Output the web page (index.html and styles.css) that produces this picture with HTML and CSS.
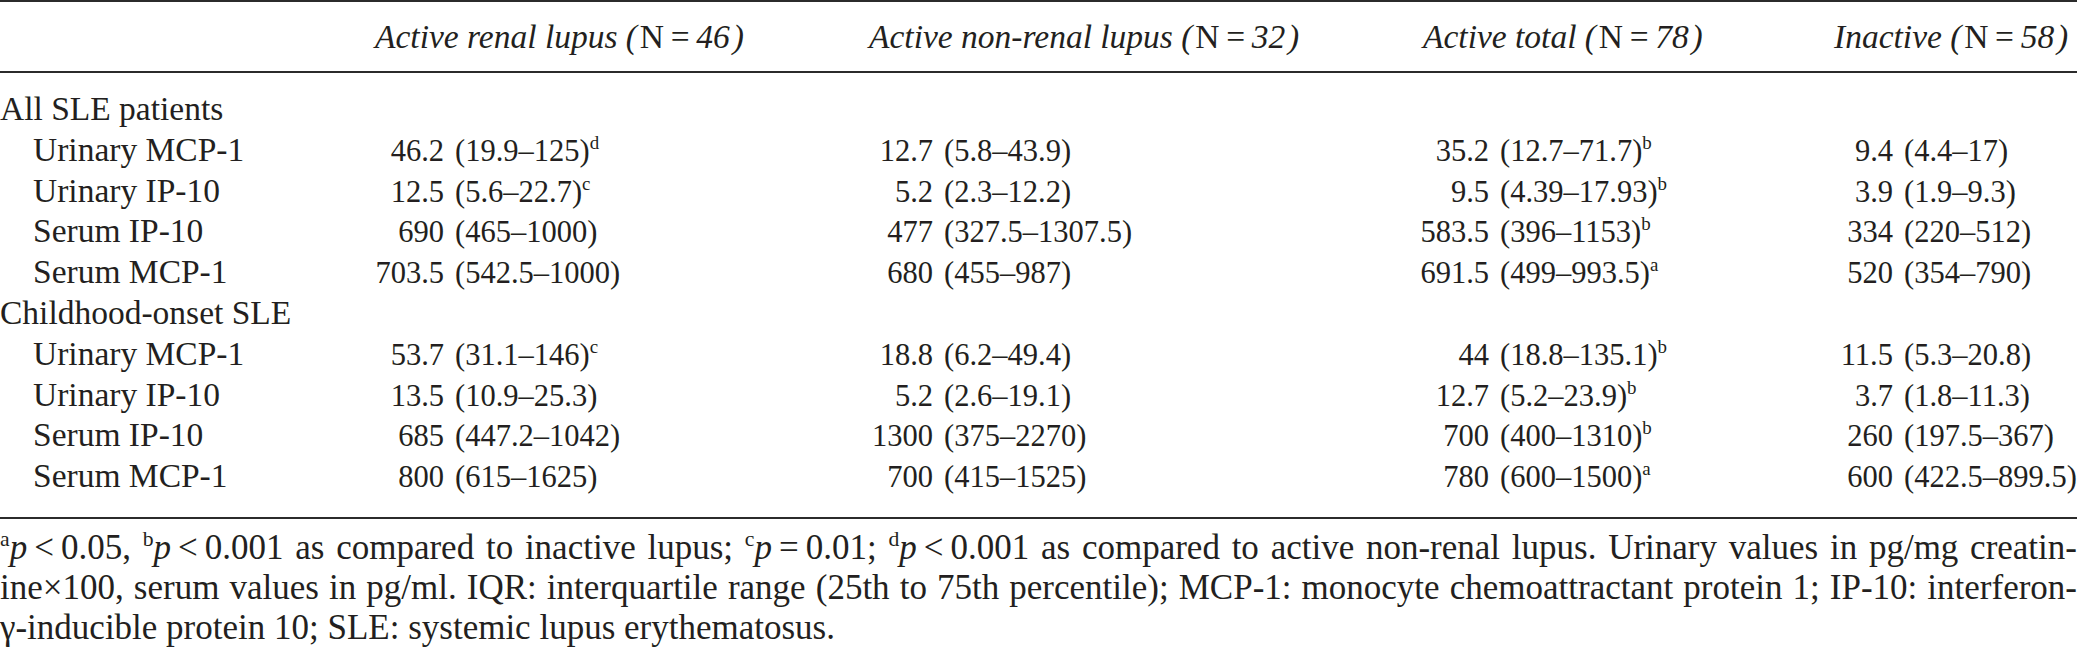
FILE: index.html
```html
<!DOCTYPE html>
<html>
<head>
<meta charset="utf-8">
<link rel="stylesheet" href="styles.css">
</head>
<body>
<div class="page">
  <div class="table">
    <div class="head">
      <div class="hc"></div>
      <div class="hc"><i>Active renal lupus (&#8202;</i>N&#8201;=&#8201;<i>46&#8202;)</i></div>
      <div class="hc"><i>Active non-renal lupus (&#8202;</i>N&#8201;=&#8201;<i>32&#8202;)</i></div>
      <div class="hc"><i>Active total (&#8202;</i>N&#8201;=&#8201;<i>78&#8202;)</i></div>
      <div class="hc"><i>Inactive (&#8202;</i>N&#8201;=&#8201;<i>58&#8202;)</i></div>
    </div>
    <div class="body">
      <div class="row"><div class="lab grp">All SLE patients</div></div>

      <div class="row">
        <div class="lab">Urinary MCP-1</div>
        <div class="cell"><span class="n">46.2</span><span>(19.9–125)<sup>d</sup></span></div>
        <div class="cell"><span class="n">12.7</span><span>(5.8–43.9)</span></div>
        <div class="cell"><span class="n">35.2</span><span>(12.7–71.7)<sup>b</sup></span></div>
        <div class="cell"><span class="n">9.4</span><span>(4.4–17)</span></div>
      </div>
      <div class="row">
        <div class="lab">Urinary IP-10</div>
        <div class="cell"><span class="n">12.5</span><span>(5.6–22.7)<sup>c</sup></span></div>
        <div class="cell"><span class="n">5.2</span><span>(2.3–12.2)</span></div>
        <div class="cell"><span class="n">9.5</span><span>(4.39–17.93)<sup>b</sup></span></div>
        <div class="cell"><span class="n">3.9</span><span>(1.9–9.3)</span></div>
      </div>
      <div class="row">
        <div class="lab">Serum IP-10</div>
        <div class="cell"><span class="n">690</span><span>(465–1000)</span></div>
        <div class="cell"><span class="n">477</span><span>(327.5–1307.5)</span></div>
        <div class="cell"><span class="n">583.5</span><span>(396–1153)<sup>b</sup></span></div>
        <div class="cell"><span class="n">334</span><span>(220–512)</span></div>
      </div>
      <div class="row">
        <div class="lab">Serum MCP-1</div>
        <div class="cell"><span class="n">703.5</span><span>(542.5–1000)</span></div>
        <div class="cell"><span class="n">680</span><span>(455–987)</span></div>
        <div class="cell"><span class="n">691.5</span><span>(499–993.5)<sup>a</sup></span></div>
        <div class="cell"><span class="n">520</span><span>(354–790)</span></div>
      </div>

      <div class="row"><div class="lab grp">Childhood-onset SLE</div></div>

      <div class="row">
        <div class="lab">Urinary MCP-1</div>
        <div class="cell"><span class="n">53.7</span><span>(31.1–146)<sup>c</sup></span></div>
        <div class="cell"><span class="n">18.8</span><span>(6.2–49.4)</span></div>
        <div class="cell"><span class="n">44</span><span>(18.8–135.1)<sup>b</sup></span></div>
        <div class="cell"><span class="n">11.5</span><span>(5.3–20.8)</span></div>
      </div>
      <div class="row">
        <div class="lab">Urinary IP-10</div>
        <div class="cell"><span class="n">13.5</span><span>(10.9–25.3)</span></div>
        <div class="cell"><span class="n">5.2</span><span>(2.6–19.1)</span></div>
        <div class="cell"><span class="n">12.7</span><span>(5.2–23.9)<sup>b</sup></span></div>
        <div class="cell"><span class="n">3.7</span><span>(1.8–11.3)</span></div>
      </div>
      <div class="row">
        <div class="lab">Serum IP-10</div>
        <div class="cell"><span class="n">685</span><span>(447.2–1042)</span></div>
        <div class="cell"><span class="n">1300</span><span>(375–2270)</span></div>
        <div class="cell"><span class="n">700</span><span>(400–1310)<sup>b</sup></span></div>
        <div class="cell"><span class="n">260</span><span>(197.5–367)</span></div>
      </div>
      <div class="row">
        <div class="lab">Serum MCP-1</div>
        <div class="cell"><span class="n">800</span><span>(615–1625)</span></div>
        <div class="cell"><span class="n">700</span><span>(415–1525)</span></div>
        <div class="cell"><span class="n">780</span><span>(600–1500)<sup>a</sup></span></div>
        <div class="cell"><span class="n">600</span><span>(422.5–899.5)</span></div>
      </div>
    </div>
  </div>
  <div class="notes">
    <div class="line just"><sup>a</sup><i>p</i>&#8201;&lt;&#8201;0.05, <sup>b</sup><i>p</i>&#8201;&lt;&#8201;0.001 as compared to inactive lupus; <sup>c</sup><i>p</i>&#8201;=&#8201;0.01; <sup>d</sup><i>p</i>&#8201;&lt;&#8201;0.001 as compared to active non-renal lupus. Urinary values in pg/mg creatin-</div>
    <div class="line just">ine×100, serum values in pg/ml. IQR: interquartile range (25th to 75th percentile); MCP-1: monocyte chemoattractant protein 1; IP-10: interferon-</div>
    <div class="line">γ-inducible protein 10; SLE: systemic lupus erythematosus.</div>
  </div>
</div>
</body>
</html>
```

FILE: styles.css
```css
html, body {
  margin: 0;
  padding: 0;
  background: #ffffff;
}
body {
  font-family: "Liberation Serif", "Times New Roman", serif;
  font-size: 33.5px;
  color: #231f20;
}
.page {
  width: 2077px;
  overflow: hidden;
}
.table {
  border-top: 2px solid #2b2b2b;
  border-bottom: 2px solid #2b2b2b;
}
.head {
  display: grid;
  grid-template-columns: 375px 494px 554px 411px 1fr;
  align-items: center;
  height: 69px;
  line-height: 40px;
  border-bottom: 2px solid #2b2b2b;
  white-space: nowrap;
}
.body {
  padding-top: 16px;
  padding-bottom: 20px;
}
.row {
  display: grid;
  grid-template-columns: 370px 489px 556px 404px 1fr;
  align-items: baseline;
  height: 40.8px;
  line-height: 40.8px;
  white-space: nowrap;
}
.lab {
  padding-left: 33px;
}
.lab.grp {
  padding-left: 0;
  grid-column: 1 / 3;
}
.cell {
  display: flex;
  font-size: 30.5px;
}
.n {
  display: inline-block;
  width: 74px;
  padding-right: 11px;
  text-align: right;
}
sup {
  font-size: 0.62em;
  line-height: 0;
  vertical-align: 0.62em;
}
.notes {
  padding-top: 9px;
  font-size: 35px;
  line-height: 40px;
}
.line {
  white-space: nowrap;
}
.line.just {
  text-align: justify;
  text-align-last: justify;
}
```
